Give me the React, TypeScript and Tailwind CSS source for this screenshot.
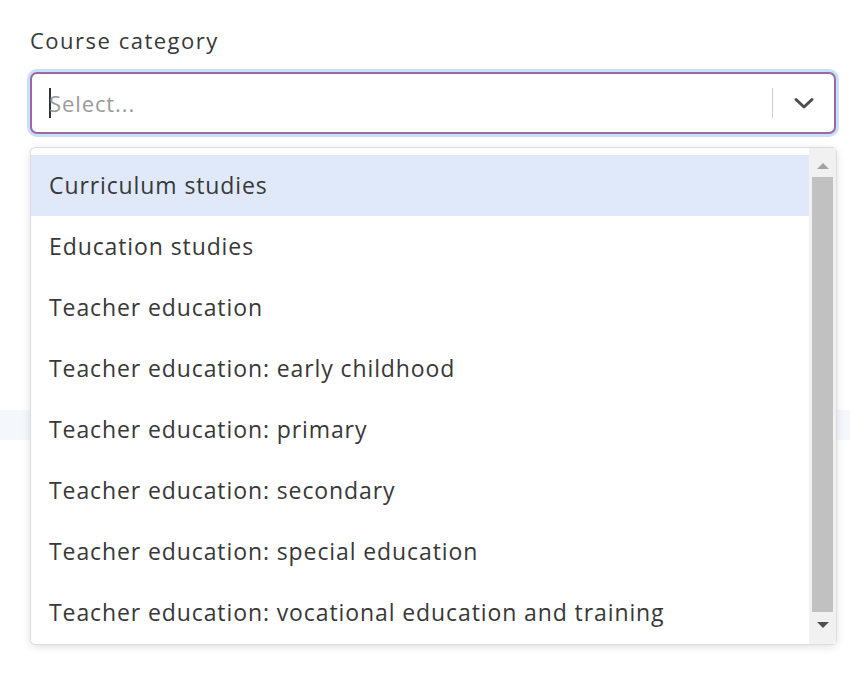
import React from 'react';

const OPTIONS = [
  'Curriculum studies',
  'Education studies',
  'Teacher education',
  'Teacher education: early childhood',
  'Teacher education: primary',
  'Teacher education: secondary',
  'Teacher education: special education',
  'Teacher education: vocational education and training',
];

function Chevron() {
  return (
    <svg width="22" height="14" viewBox="0 0 22 14" fill="none">
      <path d="M3 3.5 L11 11 L19 3.5" stroke="#4d4d4d" strokeWidth="3" strokeLinecap="round" strokeLinejoin="round" />
    </svg>
  );
}

export default function App() {
  return (
    <div
      className="relative w-[850px] h-[673px] overflow-hidden bg-white"
      style={{ fontFamily: '"Open Sans", "Liberation Sans", sans-serif' }}
    >
      <div className="pl-[30px] pr-[14px] pt-[25px]">
        <label className="block text-[22px] leading-[30px] text-[#383838] tracking-[1.5px]">Course category</label>

        {/* select control */}
        <div className="mt-[17px] flex h-[62px] items-center rounded-[7px] border-2 border-[#9a68a4] bg-white shadow-[0_0_0_3px_#c9def8]">
          <div className="flex flex-1 items-center pl-[17px]">
            <span className="h-[30px] w-[2px] bg-[#333]" />
            <span className="-ml-[2px] text-[22px] text-[#9a9a9a] tracking-[0.9px]">Select...</span>
          </div>
          <span className="h-[30px] w-px bg-[#cccccc]" />
          <div className="flex w-[61px] items-center justify-center">
            <Chevron />
          </div>
        </div>

        {/* underlying form content, mostly hidden by the menu */}
        <div className="mt-[276px] h-[30px] -ml-[30px] -mr-[14px] bg-[#f4f7fb]" />
      </div>

      {/* dropdown menu */}
      <div className="absolute left-[30px] top-[147px] flex h-[498px] w-[807px] rounded-[5px] border border-[#dcdcdc] bg-white shadow-[0_2px_8px_rgba(0,0,0,0.12)]">
        <div className="flex-1 pt-[7px]">
          {OPTIONS.map((opt, i) => (
            <div
              key={opt}
              className={`flex h-[61px] items-center pl-[18px] text-[23px] text-[#383838] tracking-[0.9px] ${i === 0 ? 'bg-[#dfe9fa]' : ''}`}
            >
              {opt}
            </div>
          ))}
        </div>
        <div className="flex w-[27px] flex-col items-center bg-[#f1f1f1] pt-[7px] pb-[6px]">
          <div className="flex h-[22px] items-center justify-center">
            <div className="h-0 w-0 border-x-[6px] border-b-[6px] border-x-transparent border-b-[#a3a3a3]" />
          </div>
          <div className="w-[21px] flex-1 bg-[#c1c1c1]" />
          <div className="flex h-[26px] items-center justify-center">
            <div className="h-0 w-0 border-x-[6px] border-t-[6px] border-x-transparent border-t-[#505050]" />
          </div>
        </div>
      </div>
    </div>
  );
}
